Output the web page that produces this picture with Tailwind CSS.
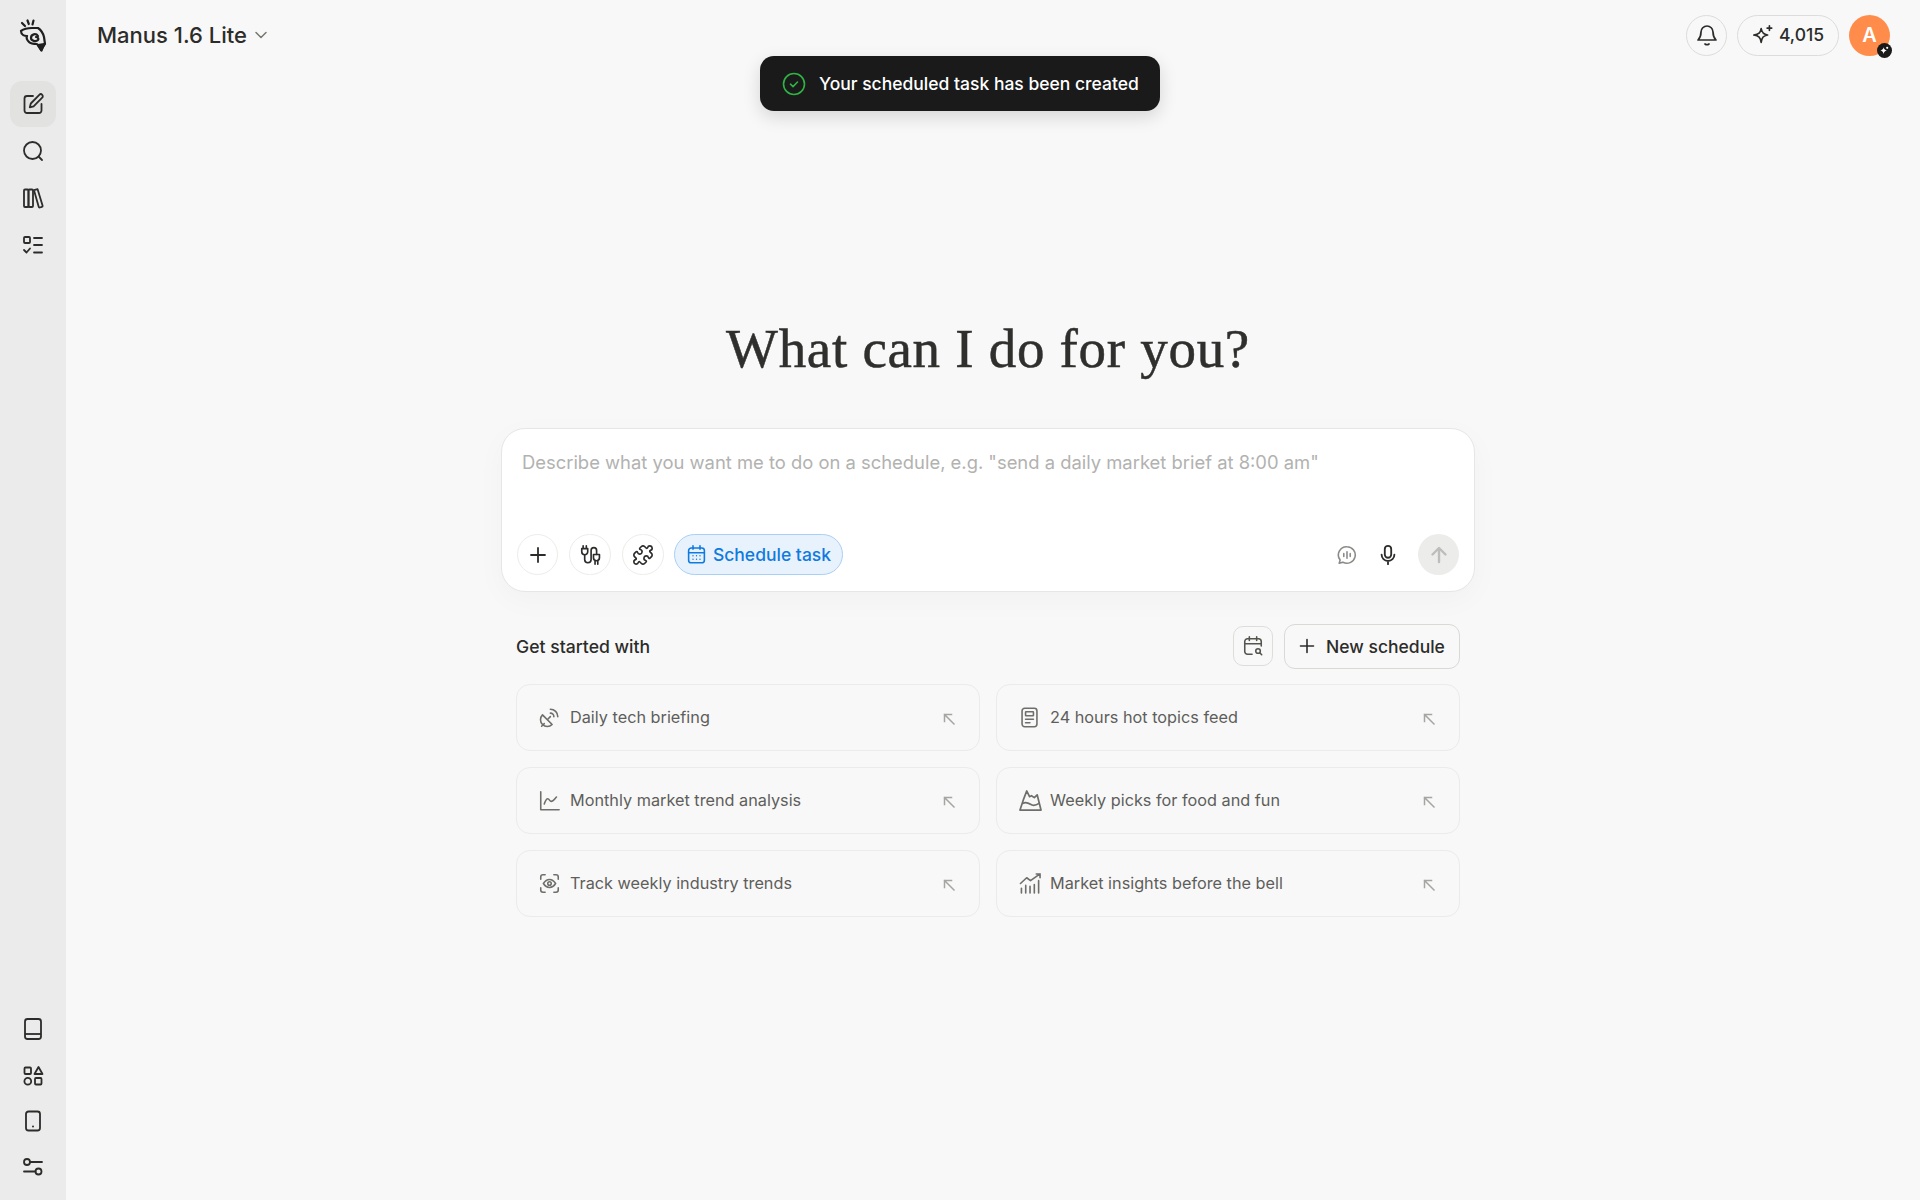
<!DOCTYPE html>
<html lang="en">
<head>
  <meta charset="UTF-8"/>
  <meta name="viewport" content="width=device-width, initial-scale=1.0"/>
  <title>Manus</title>
  <script src="https://cdn.jsdelivr.net/npm/@tailwindcss/browser@4"></script>
</head>
<body class="h-[1200px] w-[1920px] overflow-hidden bg-[#f8f8f8] font-[Inter,sans-serif] text-[#2c2c2a] flex relative">

  <!-- toast -->
  <div class="absolute left-[760px] top-[56px] w-[400px] h-[55px] z-10 bg-[#1a1a1a] rounded-[14px] shadow-[0_6px_18px_rgba(0,0,0,0.14)] flex items-center pl-[22px] gap-[13px] text-white text-[17.5px] font-medium">
    <svg class="w-6 h-6" viewBox="0 0 24 24" fill="none" stroke="#2fb344" stroke-width="1.6" stroke-linecap="round" stroke-linejoin="round"><circle cx="12" cy="12" r="10.5"/><path d="M8.5 12.2l2.5 2.4 4.5-4.6"/></svg>
    <span class="pt-[1px]">Your scheduled task has been created</span>
  </div>

  <!-- sidebar -->
  <aside class="w-[66px] shrink-0 h-full bg-[#ebebeb] flex flex-col items-center">
    <div class="h-[70px] flex items-center justify-center">
      <svg class="w-[30px] h-[34px]" viewBox="18 18 30 34" fill="none" stroke="#1f1f1f" stroke-width="2.2" stroke-linecap="round" stroke-linejoin="round">
        <path d="M22 23l3 3M27.500 20.500l1.300 3.500M33.500 20.500l-1 4"/>
        <path d="M21 31c4-3 8-3 11-3h6c3 2 5 5 6 9l1 7-4 6-4-6c-3 0-6 0-8-2s-3-4-2-6c-2 0-6-1-6-5z"/>
        <path d="M38 36c-2-3-7-2-7 2 0 3 5 4 7 2 1-1 0-3-2-3"/>
        <path d="M38 45l6-1-2.500 6.500z" fill="#1f1f1f"/>
      </svg>
    </div>
    <nav class="mt-[11px] flex flex-col items-center gap-[1px] w-full">
      <div class="w-[46px] h-[46px] rounded-[12px] bg-[#e2e2e1] flex items-center justify-center">
        <svg class="w-6 h-6" viewBox="0 0 24 24" fill="none" stroke="#2c2c2a" stroke-width="1.8" stroke-linecap="round" stroke-linejoin="round"><path d="M12 4H6a2.5 2.5 0 0 0-2.5 2.5v12A2.5 2.5 0 0 0 6 21h12a2.5 2.5 0 0 0 2.5-2.5V12"/><path d="M18.3 2.8a2 2 0 0 1 2.9 2.9L12.6 14.3l-3.8 1 1-3.8z"/></svg>
      </div>
      <div class="w-[46px] h-[46px] flex items-center justify-center">
        <svg class="w-6 h-6" viewBox="0 0 24 24" fill="none" stroke="#2c2c2a" stroke-width="1.8" stroke-linecap="round"><circle cx="11.5" cy="11.5" r="8.5"/><path d="M18 18l3 3"/></svg>
      </div>
      <div class="w-[46px] h-[46px] flex items-center justify-center">
        <svg class="w-6 h-6" viewBox="0 0 24 24" fill="none" stroke="#2c2c2a" stroke-width="1.8" stroke-linejoin="round"><rect x="3" y="3.5" width="4.5" height="17.5" rx="1"/><rect x="7.5" y="3.5" width="4.5" height="17.5" rx="1"/><path d="M13 4.2l3.6-1 5 16.5a1 1 0 0 1-.7 1.2l-2 .6a1 1 0 0 1-1.200-.7z"/></svg>
      </div>
      <div class="w-[46px] h-[46px] flex items-center justify-center">
        <svg class="w-6 h-6" viewBox="0 0 24 24" fill="none" stroke="#2c2c2a" stroke-width="1.8" stroke-linecap="round" stroke-linejoin="round"><rect x="3" y="4" width="6" height="6" rx="1"/><path d="M3 17l2.500 2.500L9 15.500"/><path d="M13 5h8M13 12h8M13 19.500h8"/></svg>
      </div>
    </nav>
    <div class="mt-auto mb-[10px] flex flex-col items-center">
      <div class="w-[46px] h-[46px] flex items-center justify-center pb-[2px]">
        <svg class="w-6 h-6" viewBox="0 0 24 24" fill="none" stroke="#2c2c2a" stroke-width="1.8" stroke-linejoin="round"><rect x="4" y="2" width="16" height="20" rx="2.500"/><path d="M4 17h16"/></svg>
      </div>
      <div class="w-[46px] h-[45px] flex items-center justify-center">
        <svg class="w-6 h-6" viewBox="0 0 24 24" fill="none" stroke="#2c2c2a" stroke-width="1.8" stroke-linejoin="round"><rect x="3.500" y="3.500" width="6.500" height="6.500" rx="1"/><path d="M17.500 3l4 7h-8z"/><circle cx="6.800" cy="17.200" r="3.400"/><rect x="14" y="14" width="6.500" height="6.500" rx="1"/></svg>
      </div>
      <div class="w-[46px] h-[46px] flex items-center justify-center">
        <svg class="w-6 h-6" viewBox="0 0 24 24" fill="none" stroke="#2c2c2a" stroke-width="1.8" stroke-linejoin="round"><rect x="5" y="2.500" width="14" height="19" rx="2.500"/><circle cx="12" cy="17.500" r="1" fill="#2c2c2a" stroke="none"/></svg>
      </div>
      <div class="w-[46px] h-[46px] flex items-center justify-center">
        <svg class="w-6 h-6" viewBox="0 0 24 24" fill="none" stroke="#2c2c2a" stroke-width="1.8" stroke-linecap="round"><circle cx="6" cy="7" r="3"/><path d="M9 7h12"/><circle cx="17.500" cy="16.500" r="3"/><path d="M3 16.500h11.500"/></svg>
      </div>
    </div>
  </aside>

  <!-- main -->
  <main class="flex-1 h-full flex flex-col">
    <header class="h-[70px] flex items-center pl-[31px] pr-[30px]">
      <span class="pt-[1px] text-[22px] font-medium text-[#2c2c2a]">Manus 1.6 Lite</span>
      <svg class="ml-[7px] w-[14px] h-[14px]" viewBox="0 0 14 14" fill="none" stroke="#77776f" stroke-width="1.5" stroke-linecap="round" stroke-linejoin="round"><path d="M2 4.500l5 5 5-5"/></svg>
      <div class="ml-auto flex items-center gap-[10px]">
        <div class="w-[41px] h-[41px] rounded-full border border-[#dcdcda] flex items-center justify-center">
          <svg class="w-[24px] h-[24px]" viewBox="0 0 24 24" fill="none" stroke="#2c2c2a" stroke-width="1.700" stroke-linecap="round" stroke-linejoin="round"><path d="M6 9a6 6 0 0 1 12 0c0 5 2 7 3 8H3c1-1 3-3 3-8z"/><path d="M10 21c1 .7 3 .7 4 0"/></svg>
        </div>
        <div class="w-[102px] h-[41px] rounded-full border border-[#dcdcda] flex items-center justify-center gap-[5px] text-[17.500px] font-medium">
          <svg class="w-[22px] h-[22px]" viewBox="0 0 24 24" fill="none" stroke="#2c2c2a" stroke-width="1.800" stroke-linejoin="round" stroke-linecap="round"><path d="M10 5c.8 4.500 2.500 6.200 7 7-4.500.8-6.200 2.500-7 8-.8-5.500-2.500-7.200-8-8 5.500-.8 7.200-2.500 8-7z"/><path d="M19 2v5M16.500 4.500h5"/></svg>
          <span class="pt-[1px]">4,015</span>
        </div>
        <div class="relative w-[41px] h-[41px] rounded-full bg-[#ff8c4b] flex items-center justify-center text-white text-[20px] font-semibold">
          A
          <span class="absolute right-[-2px] bottom-[-2px] w-[15px] h-[15px] rounded-full bg-[#1a1a1a] flex items-center justify-center">
            <svg class="w-[9px] h-[9px]" viewBox="0 0 10 10" fill="#fff"><path d="M4 1.500c.4 2 1.200 2.800 3.500 3.500C5.200 5.700 4.400 6.500 4 9 3.600 6.500 2.800 5.700.5 5 2.800 4.300 3.600 3.500 4 1.500z"/><circle cx="8" cy="2" r="1.200"/></svg>
          </span>
        </div>
      </div>
    </header>

    <section class="w-[974px] ml-[435px] flex flex-col">
      <h1 class="mt-[245px] h-[70px] leading-[68px] text-center text-[55px] tracking-[0.7px] [-webkit-text-stroke:0.5px_#2f2f2d] text-[#2f2f2d] font-['Liberation_Serif',serif]">What can I do for you?</h1>

      <!-- composer -->
      <div class="mt-[43px] h-[164px] bg-white border border-[#e6e6e4] rounded-[24px] shadow-[0_8px_30px_rgba(0,0,0,0.03)] flex flex-col px-[15px] pb-[16px] pt-[20px]">
        <p class="pl-[5px] text-[18.400px] leading-[26px] text-[#b2b2b0]">Describe what you want me to do on a schedule, e.g. "send a daily market brief at 8:00 am"</p>
        <div class="mt-auto flex items-center">
          <div class="w-[41px] h-[41px] rounded-full border border-[#ececea] flex items-center justify-center">
            <svg class="w-[20px] h-[20px]" viewBox="0 0 20 20" fill="none" stroke="#2c2c2a" stroke-width="1.800" stroke-linecap="round"><path d="M10 3v14M3 10h14"/></svg>
          </div>
          <div class="ml-[11px] w-[42px] h-[41px] rounded-full border border-[#ececea] flex items-center justify-center">
            <svg class="w-[22px] h-[22px]" viewBox="0 0 24 24" fill="none" stroke="#2c2c2a" stroke-width="1.800" stroke-linecap="round" stroke-linejoin="round"><path d="M4.500 2v3M8 2v3M3 5h6.500v3.500a3.250 3.250 0 0 1-6.500 0z"/><path d="M6.200 12v5a3.500 3.500 0 0 0 7 0V7a3 3 0 0 1 6 0v4.500"/><path d="M15.800 11.500h6.500V15a3.250 3.250 0 0 1-6.500 0zM17.500 18.500V22M20.500 18.500V22"/></svg>
          </div>
          <div class="ml-[11px] w-[42px] h-[41px] rounded-full border border-[#ececea] flex items-center justify-center">
            <svg class="w-[22px] h-[22px]" viewBox="0 0 24 24" fill="none" stroke="#2c2c2a" stroke-width="1.800" stroke-linecap="round" stroke-linejoin="round"><path d="M15.390 4.390a1 1 0 0 0 1.680-.474 2.500 2.500 0 1 1 3.014 3.015 1 1 0 0 0-.474 1.680l1.683 1.682a2.414 2.414 0 0 1 0 3.414L19.610 15.390a1 1 0 0 1-1.680-.474 2.500 2.500 0 1 0-3.014 3.015 1 1 0 0 1 .474 1.680l-1.683 1.682a2.414 2.414 0 0 1-3.414 0L8.610 19.610a1 1 0 0 0-1.680.474 2.500 2.500 0 1 1-3.014-3.015 1 1 0 0 0 .474-1.680l-1.683-1.682a2.414 2.414 0 0 1 0-3.414L4.390 8.610a1 1 0 0 1 1.680.474 2.500 2.500 0 1 0 3.014-3.015 1 1 0 0 1-.474-1.680l1.683-1.682a2.414 2.414 0 0 1 3.414 0z"/></svg>
          </div>
          <div class="ml-[10px] h-[41px] w-[169px] rounded-full bg-[#e8f2fc] border border-[#a8cff5] flex items-center justify-center gap-[6px] text-[17.500px] font-medium text-[#0f7ae0]">
            <svg class="w-[21px] h-[21px]" viewBox="0 0 24 24" fill="none" stroke="#0f7ae0" stroke-width="1.800" stroke-linecap="round" stroke-linejoin="round"><rect x="3" y="4.500" width="18" height="17" rx="3"/><path d="M3 10h18M8 2v4M16 2v4"/><path stroke-width="1.600" d="M8 13.500h.01M12 13.500h.01M16 13.500h.01M8 17.500h.01M12 17.500h.01M16 17.500h.01"/></svg>
            <span class="pt-[1px]">Schedule task</span>
          </div>
          <div class="ml-auto w-[22px] h-[22px]">
            <svg class="w-[22px] h-[22px]" viewBox="0 0 24 24" fill="none" stroke="#8a8a87" stroke-width="1.700" stroke-linecap="round" stroke-linejoin="round"><path d="M12 3a9 9 0 1 1-4.500 16.800L3.500 21l1-3.500A9 9 0 0 1 12 3z"/><path d="M8.500 10.500v3M12 8.500v7M15.500 10.500v3"/></svg>
          </div>
          <div class="ml-[19px] w-[22px] h-[22px]">
            <svg class="w-[22px] h-[22px]" viewBox="0 0 24 24" fill="none" stroke="#2c2c2a" stroke-width="2" stroke-linecap="round" stroke-linejoin="round"><rect x="8.500" y="2" width="7" height="13" rx="3.500"/><path d="M5 11.500a7 7 0 0 0 14 0M12 18.500V22"/></svg>
          </div>
          <div class="ml-[19px] w-[41px] h-[41px] rounded-full bg-[#ececeb] flex items-center justify-center">
            <svg class="w-[20px] h-[20px]" viewBox="0 0 20 20" fill="none" stroke="#bdbdbb" stroke-width="2.400" stroke-linecap="round" stroke-linejoin="round"><path d="M10 17V3.500M3.500 9.500L10 3l6.500 6.500"/></svg>
          </div>
        </div>
      </div>

      <!-- suggestions -->
      <div class="mt-[32px] px-[15px]">
        <div class="h-[44px] flex items-center">
          <span class="pt-[2px] text-[17.600px] font-medium text-[#2c2c2a]">Get started with</span>
          <div class="ml-auto w-[40px] h-[40px] rounded-[10px] border border-[#dedddb] flex items-center justify-center">
            <svg class="w-[22px] h-[22px]" viewBox="0 0 24 24" fill="none" stroke="#55554f" stroke-width="1.700" stroke-linecap="round" stroke-linejoin="round"><path d="M11 21H6a3 3 0 0 1-3-3V7a3 3 0 0 1 3-3h12a3 3 0 0 1 3 3v5M3 9.500h18M8 2v4M16 2v4"/><circle cx="17.500" cy="17.500" r="2.500"/><path d="M19.500 19.500L21.500 21.500"/></svg>
          </div>
          <div class="ml-[11px] w-[176px] h-[45px] rounded-[11px] border border-[#d9d9d6] flex items-center justify-center gap-[11px] text-[17.500px] font-medium">
            <svg class="w-[16px] h-[16px]" viewBox="0 0 16 16" fill="none" stroke="#2c2c2a" stroke-width="1.600" stroke-linecap="round"><path d="M8 1.500v13M1.500 8h13"/></svg>
            <span class="pt-[2px]">New schedule</span>
          </div>
        </div>
        <div class="mt-[16px] grid grid-cols-2 gap-4 text-[16.250px] text-[#5e5e5b]">
          <div class="h-[67px] rounded-[14px] border border-[#ebebe9] flex items-center pl-[22px] pr-[23px]">
            <svg class="w-[21px] h-[21px] shrink-0" viewBox="0 0 24 24" fill="none" stroke="#6e6e6a" stroke-width="1.800" stroke-linecap="round" stroke-linejoin="round"><path d="M4 9l11 11a7.500 7.500 0 0 1-11-11z"/><path d="M3 22l3-3M10 14l3-3"/><path d="M13 7a4 4 0 0 1 4 4M13 2.500A8.500 8.500 0 0 1 21.500 11"/></svg>
            <span class="ml-[10px]">Daily tech briefing</span>
            <svg class="ml-auto mt-[3px] w-[14px] h-[14px]" viewBox="0 0 14 14" fill="none" stroke="#a5a5a2" stroke-width="1.500" stroke-linecap="square"><path d="M2.500 2.500L12 12M2.500 2.500h7M2.500 2.500v7"/></svg>
          </div>
          <div class="h-[67px] rounded-[14px] border border-[#ebebe9] flex items-center pl-[22px] pr-[23px]">
            <svg class="w-[21px] h-[21px] shrink-0" viewBox="0 0 24 24" fill="none" stroke="#6e6e6a" stroke-width="1.800" stroke-linecap="round" stroke-linejoin="round"><rect x="3.500" y="1.500" width="17" height="21" rx="3"/><rect x="7.500" y="5.500" width="9" height="4.500" rx=".5"/><path d="M7.500 14h9M7.500 18h5"/></svg>
            <span class="ml-[10px]">24 hours hot topics feed</span>
            <svg class="ml-auto mt-[3px] w-[14px] h-[14px]" viewBox="0 0 14 14" fill="none" stroke="#a5a5a2" stroke-width="1.500" stroke-linecap="square"><path d="M2.500 2.500L12 12M2.500 2.500h7M2.500 2.500v7"/></svg>
          </div>
          <div class="h-[67px] rounded-[14px] border border-[#ebebe9] flex items-center pl-[22px] pr-[23px]">
            <svg class="w-[21px] h-[21px] shrink-0" viewBox="0 0 24 24" fill="none" stroke="#6e6e6a" stroke-width="1.800" stroke-linecap="round" stroke-linejoin="round"><path d="M2 2v20.500h21"/><path d="M6 16c1-3 2-6 4-6s2 3 4 3 4-3 6-5"/></svg>
            <span class="ml-[10px]">Monthly market trend analysis</span>
            <svg class="ml-auto mt-[3px] w-[14px] h-[14px]" viewBox="0 0 14 14" fill="none" stroke="#a5a5a2" stroke-width="1.500" stroke-linecap="square"><path d="M2.500 2.500L12 12M2.500 2.500h7M2.500 2.500v7"/></svg>
          </div>
          <div class="h-[67px] rounded-[14px] border border-[#ebebe9] flex items-center pl-[22px] pr-[23px]">
            <svg class="w-[23px] h-[21px] shrink-0" viewBox="0 0 24 22" fill="none" stroke="#6e6e6a" stroke-width="1.800" stroke-linecap="round" stroke-linejoin="round"><path d="M1 21h22l-4-16-3 3-3-2-2 1-3-6-3 8z"/><path d="M4 14c3-2 5-1 8 1s6 1 9-1"/></svg>
            <span class="ml-[8px]">Weekly picks for food and fun</span>
            <svg class="ml-auto mt-[3px] w-[14px] h-[14px]" viewBox="0 0 14 14" fill="none" stroke="#a5a5a2" stroke-width="1.500" stroke-linecap="square"><path d="M2.500 2.500L12 12M2.500 2.500h7M2.500 2.500v7"/></svg>
          </div>
          <div class="h-[67px] rounded-[14px] border border-[#ebebe9] flex items-center pl-[22px] pr-[23px]">
            <svg class="w-[21px] h-[21px] shrink-0" viewBox="0 0 24 24" fill="none" stroke="#6e6e6a" stroke-width="1.800" stroke-linecap="round" stroke-linejoin="round"><path d="M2 7V4.500A2.500 2.500 0 0 1 4.500 2H7M17 2h2.500A2.500 2.500 0 0 1 22 4.500V7M22 17v2.500a2.500 2.500 0 0 1-2.500 2.500H17M7 22H4.500A2.500 2.500 0 0 1 2 19.500V17"/><path d="M5 12c2-3 4.500-4.500 7-4.500s5 1.500 7 4.500c-2 3-4.500 4.500-7 4.500S7 15 5 12z"/><circle cx="12" cy="12" r="2"/></svg>
            <span class="ml-[10px] pb-[1px]">Track weekly industry trends</span>
            <svg class="ml-auto mt-[3px] w-[14px] h-[14px]" viewBox="0 0 14 14" fill="none" stroke="#a5a5a2" stroke-width="1.500" stroke-linecap="square"><path d="M2.500 2.500L12 12M2.500 2.500h7M2.500 2.500v7"/></svg>
          </div>
          <div class="h-[67px] rounded-[14px] border border-[#ebebe9] flex items-center pl-[22px] pr-[23px]">
            <svg class="w-[23px] h-[21px] shrink-0" viewBox="0 0 24 22" fill="none" stroke="#6e6e6a" stroke-width="1.700" stroke-linecap="round" stroke-linejoin="round"><path d="M1.500 11L8 5l4 3 10-7M18 1h4v4"/><path d="M2.500 16v5M7 13v8M11.500 14v7M16 12v9M20.500 8v13"/></svg>
            <span class="ml-[8px] pb-[1px]">Market insights before the bell</span>
            <svg class="ml-auto mt-[3px] w-[14px] h-[14px]" viewBox="0 0 14 14" fill="none" stroke="#a5a5a2" stroke-width="1.500" stroke-linecap="square"><path d="M2.500 2.500L12 12M2.500 2.500h7M2.500 2.500v7"/></svg>
          </div>
        </div>
      </div>
    </section>
  </main>
</body>
</html>
